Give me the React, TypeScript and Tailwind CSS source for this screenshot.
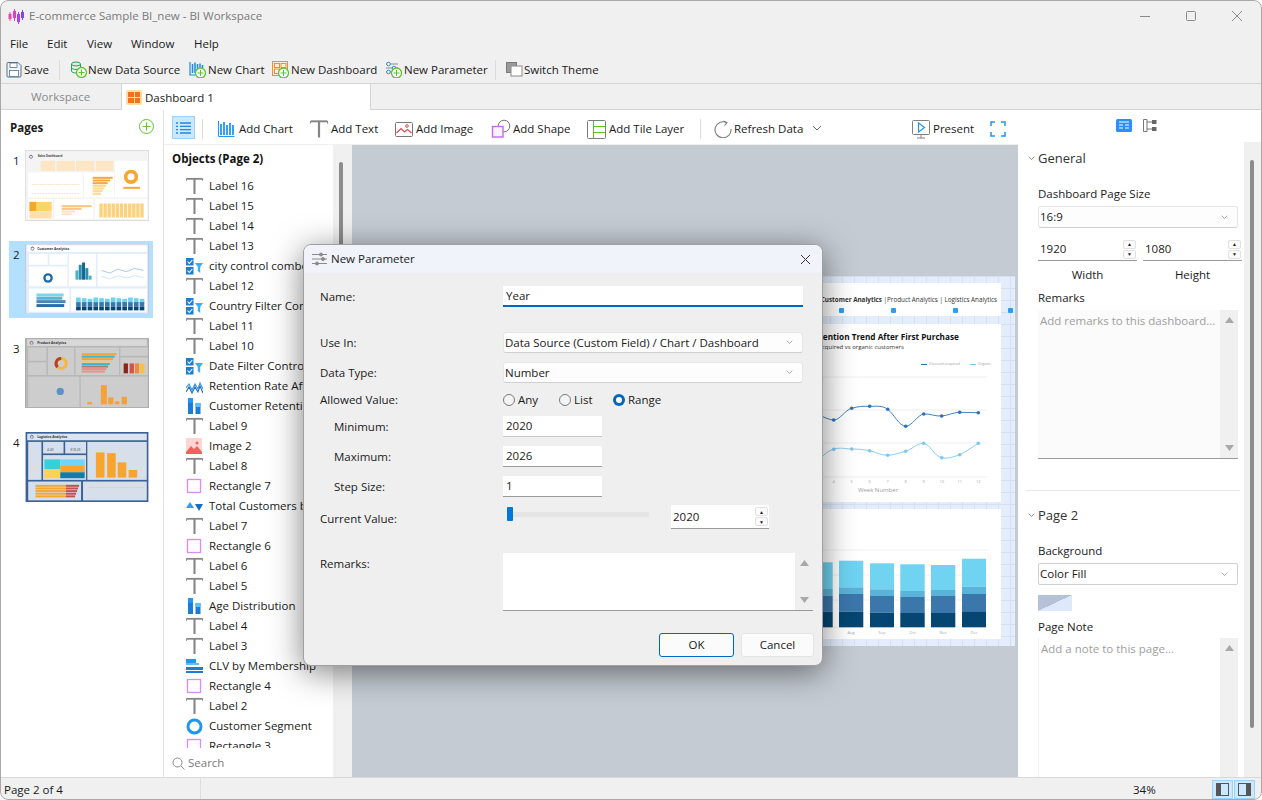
import type { ReactNode } from 'react';
import clsx from 'clsx';

// ---- small icons ----
const Plus = ({ x, y, r = 5 }: { x: number; y: number; r?: number }) => (
  <g>
    <circle cx={x} cy={y} r={r} fill="#fff" stroke="#5cc52c" strokeWidth="1.3" />
    <path d={`M${x - r + 2} ${y}H${x + r - 2}M${x} ${y - r + 2}V${y + r - 2}`} stroke="#5cc52c" strokeWidth="1.1" />
  </g>
);

const SaveIcon = () => (
  <svg width="16" height="17" viewBox="0 0 16 17" fill="none">
    <path d="M1 2.5A1 1 0 0 1 2 1.500H12L15 4.500V15A1 1 0 0 1 14 16H2A1 1 0 0 1 1 15Z" fill="#eef5fb" stroke="#55708a" />
    <rect x="4" y="2" width="7" height="4.500" fill="#fff" stroke="#55708a" strokeWidth=".8" />
    <rect x="3.500" y="9.500" width="9" height="6" fill="#fff" stroke="#55708a" strokeWidth=".8" />
  </svg>
);

const DataSourceIcon = () => (
  <svg width="17" height="17" viewBox="0 0 17 17" fill="none">
    <ellipse cx="6" cy="3" rx="4.500" ry="2" fill="#d8f0dc" stroke="#2b9a5a" />
    <path d="M1.500 3V10C1.500 11 3.500 12 6 12S10.500 11 10.500 10V3M1.500 6.500C1.500 7.500 3.500 8.500 6 8.500S10.500 7.500 10.500 6.500" stroke="#2b9a5a" />
    <Plus x={11.500} y={11.500} />
  </svg>
);

const ChartPlusIcon = () => (
  <svg width="17" height="17" viewBox="0 0 17 17" fill="none">
    <path d="M1 1V14H9" stroke="#1e88e5" strokeWidth="1.2" />
    <path d="M3.500 12V3M6 12V1.500M8.500 10V3M11 7V2.500M13.500 7V4" stroke="#1e88e5" strokeWidth="1.500" />
    <Plus x={11.500} y={12} />
  </svg>
);

const DashPlusIcon = () => (
  <svg width="17" height="17" viewBox="0 0 17 17" fill="none">
    <rect x=".5" y=".5" width="15" height="14" fill="#fff2dd" stroke="#f08a3c" />
    <rect x="2.500" y="2.500" width="5" height="4" stroke="#f08a3c" />
    <rect x="9" y="2.500" width="5" height="4" stroke="#f08a3c" />
    <rect x="2.500" y="8" width="5" height="4.500" stroke="#f08a3c" />
    <Plus x={11.500} y={12} />
  </svg>
);

const ParamPlusIcon = () => (
  <svg width="17" height="17" viewBox="0 0 17 17" fill="none">
    <path d="M1 3H13M1 7H13M1 11H7" stroke="#8a8a8a" />
    <circle cx="3.500" cy="3" r="1.800" fill="#fff" stroke="#2b86d9" />
    <circle cx="9" cy="7" r="1.800" fill="#fff" stroke="#2b86d9" />
    <circle cx="3.500" cy="11" r="1.800" fill="#fff" stroke="#2b86d9" />
    <Plus x={11.500} y={12} />
  </svg>
);

const ThemeIcon = () => (
  <svg width="17" height="15" viewBox="0 0 17 15" fill="none">
    <rect x=".5" y=".5" width="10" height="10" fill="#9a9a9a" stroke="#7a7a7a" />
    <rect x="5" y="4" width="11" height="10" fill="#fff" stroke="#8a8a8a" />
  </svg>
);

const BarsIcon = () => (
  <svg width="17" height="18" viewBox="0 0 17 18" fill="none">
    <path d="M.5 1V16.500H16.500" stroke="#2196f3" />
    <path d="M3 15V4M6 15V2M9 15V5M12 15V3M15 15V5" stroke="#2196f3" strokeWidth="1.800" />
  </svg>
);

const BigT = ({ w = 18 }: { w?: number }) => (
  <svg width={w} height="18" viewBox="0 0 18 18" fill="none">
    <path d="M.5 3.500V1H17.500V3.500" stroke="#858585" strokeWidth="1" />
    <path d="M1 1.500H17" stroke="#858585" strokeWidth="1.600" />
    <path d="M9 1.500V17.500" stroke="#858585" strokeWidth="2.200" />
  </svg>
);

const ImageIcon = () => (
  <svg width="18" height="15" viewBox="0 0 18 15" fill="none">
    <rect x=".5" y=".5" width="17" height="14" rx="1" fill="#fff" stroke="#777" />
    <path d="M1.500 11L6 6.500L9.500 10L12.500 7.500L16.500 11" stroke="#e8484f" strokeWidth="1.200" />
    <circle cx="12" cy="4" r="1.300" stroke="#e8484f" />
  </svg>
);

const ShapeIcon = () => (
  <svg width="20" height="20" viewBox="0 0 20 20" fill="none">
    <circle cx="13" cy="7" r="5.800" fill="#fff" stroke="#777" />
    <rect x="1.500" y="7.500" width="10.500" height="10.500" fill="#fbf0ff" stroke="#c768f0" strokeWidth="1.400" />
  </svg>
);

const TileIcon = () => (
  <svg width="19" height="19" viewBox="0 0 19 19" fill="none">
    <rect x=".5" y=".5" width="18" height="18" rx="1" fill="#fff" stroke="#7c7c7c" />
    <path d="M6.500 1V18" stroke="#7c7c7c" />
    <path d="M6.500 6.500H18M6.500 12.500H18" stroke="#5cc52c" strokeWidth="1.200" />
    <path d="M6.500 1V18" stroke="#5cc52c" strokeWidth=".8" />
  </svg>
);

const RefreshIcon = () => (
  <svg width="18" height="18" viewBox="0 0 18 18" fill="none">
    <path d="M12.500 2.600A8 8 0 1 0 17 9" stroke="#7d7d7d" strokeWidth="1.100" />
    <path d="M9.500 1L13 2.700L10.500 5.500" stroke="#7d7d7d" strokeWidth="1.100" />
  </svg>
);

const PresentIcon = () => (
  <svg width="18" height="19" viewBox="0 0 18 19" fill="none">
    <rect x=".5" y=".5" width="17" height="14" rx="1" fill="#fff" stroke="#808080" />
    <path d="M9 15V18M5 18H13" stroke="#808080" />
    <path d="M6.500 3V12L12.500 7.500Z" fill="#fff" stroke="#2196f3" strokeWidth="1.200" />
  </svg>
);

const FullscreenIcon = () => (
  <svg width="16" height="16" viewBox="0 0 16 16" fill="none" stroke="#1e96f0" strokeWidth="1.500">
    <path d="M1 5V1H5M11 1H15V5M15 11V15H11M5 15H1V11" />
  </svg>
);

const Chevron = ({ w = 10, c = '#666' }: { w?: number; c?: string }) => (
  <svg width={w} height={w * 0.6} viewBox="0 0 10 6" fill="none">
    <path d="M1 1L5 5L9 1" stroke={c} strokeWidth="1" />
  </svg>
);

const Tri = ({ down }: { down?: boolean }) => (
  <svg width="9" height="6" viewBox="0 0 9 6">
    <path d={down ? 'M0 0H9L4.500 6Z' : 'M0 6H9L4.500 0Z'} fill="#a8a8a8" />
  </svg>
);

const ListIcon = () => (
  <svg width="15" height="12" viewBox="0 0 15 12" stroke="#1e88e5" strokeWidth="1.300">
    <path d="M0 1H2M4 1H15M0 4.300H2M4 4.300H15M0 7.700H2M4 7.700H15M0 11H2M4 11H15" />
  </svg>
);

// ---- object tree icons ----
type Kind = 'text' | 'filter' | 'line' | 'bars' | 'image' | 'rect' | 'tri' | 'hbar' | 'donut';

const ObjIcon = ({ kind }: { kind: Kind }) => {
  if (kind === 'text') return <BigT w={17} />;
  if (kind === 'filter')
    return (
      <svg width="17" height="18" viewBox="0 0 17 18">
        <rect x="0" y="1" width="7.500" height="7.500" fill="#1a7fd4" />
        <rect x="0" y="10" width="7.500" height="7.500" fill="#1a7fd4" />
        <path d="M1.500 4.500L3.300 6.500L6.300 3M1.500 13.500L3.300 15.500L6.300 12" stroke="#fff" strokeWidth="1.100" fill="none" />
        <path d="M9 6H17L14.200 10V16L11.800 14V10Z" fill="#35b3f0" />
      </svg>
    );
  if (kind === 'line')
    return (
      <svg width="17" height="18" viewBox="0 0 17 18" fill="none">
        <path d="M0 11L3 7L6 13L9 7L12 12L14 6L17 12" stroke="#3b93de" strokeWidth="1.100" />
        <path d="M0 15L3 10L6 16L9 10L12 15L14 9L17 16" stroke="#1c6fbd" strokeWidth="1.100" />
      </svg>
    );
  if (kind === 'bars')
    return (
      <svg width="17" height="18" viewBox="0 0 17 18">
        <rect x="2" y="1" width="5" height="16" fill="#1a7fd4" />
        <rect x="2" y="1" width="5" height="5" fill="#1e9af0" />
        <rect x="9.500" y="6" width="5" height="11" fill="#1a7fd4" />
        <rect x="9.500" y="6" width="5" height="4" fill="#5bc0f5" />
      </svg>
    );
  if (kind === 'image')
    return (
      <svg width="17" height="17" viewBox="0 0 17 17">
        <rect width="16" height="16" fill="#fdd5d2" />
        <path d="M0 14L5 8L8 11L11 8L16 14V16H0Z" fill="#f0625e" />
        <circle cx="11" cy="5" r="1.500" fill="#f0625e" />
      </svg>
    );
  if (kind === 'rect')
    return (
      <svg width="17" height="16" viewBox="0 0 17 16" fill="none">
        <rect x="1.500" y="1.500" width="13" height="13" stroke="#dc8cf8" strokeWidth="1.300" fill="#fff" />
      </svg>
    );
  if (kind === 'tri')
    return (
      <svg width="17" height="12" viewBox="0 0 17 12">
        <path d="M0 8H8L4 2Z" fill="#2aa0f0" />
        <path d="M9 4H17L13 11Z" fill="#146fc0" />
      </svg>
    );
  if (kind === 'hbar')
    return (
      <svg width="17" height="16" viewBox="0 0 17 16">
        <rect x="0" y="1" width="10" height="4" fill="#1e9af0" />
        <rect x="0" y="5" width="13" height="2" fill="#5bc0f5" />
        <rect x="0" y="9" width="17" height="3" fill="#1a7fd4" />
        <rect x="0" y="13" width="17" height="2" fill="#1a7fd4" />
      </svg>
    );
  return (
    <svg width="17" height="17" viewBox="0 0 17 17" fill="none">
      <circle cx="8.500" cy="8.500" r="6.500" stroke="#1e96f0" strokeWidth="3" />
    </svg>
  );
};

const objects: [Kind, string][] = [
  ['text', 'Label 16'],
  ['text', 'Label 15'],
  ['text', 'Label 14'],
  ['text', 'Label 13'],
  ['filter', 'city control combobox'],
  ['text', 'Label 12'],
  ['filter', 'Country Filter Control'],
  ['text', 'Label 11'],
  ['text', 'Label 10'],
  ['filter', 'Date Filter Control'],
  ['line', 'Retention Rate After'],
  ['bars', 'Customer Retention'],
  ['text', 'Label 9'],
  ['image', 'Image 2'],
  ['text', 'Label 8'],
  ['rect', 'Rectangle 7'],
  ['tri', 'Total Customers by'],
  ['text', 'Label 7'],
  ['rect', 'Rectangle 6'],
  ['text', 'Label 6'],
  ['text', 'Label 5'],
  ['bars', 'Age Distribution'],
  ['text', 'Label 4'],
  ['text', 'Label 3'],
  ['hbar', 'CLV by Membership'],
  ['rect', 'Rectangle 4'],
  ['text', 'Label 2'],
  ['donut', 'Customer Segment'],
  ['rect', 'Rectangle 3'],
];

// ---- page thumbnails, coordinates read off the screenshot at 3x ----
const Logo = ({ x, y }: { x: number; y: number }) => (
  <g fill="none" strokeWidth="2.500">
    <circle cx={x} cy={y} r="4.500" stroke="#2f7ee0" />
    <path d={`M${x - 4} ${y - 2}A4.500 4.500 0 0 1 ${x + 3} ${y - 3.500}`} stroke="#e8433a" />
    <path d={`M${x + 4} ${y + 2}A4.500 4.500 0 0 1 ${x - 3} ${y + 3.500}`} stroke="#f5b72b" />
  </g>
);

const Thumb1 = () => (
  <svg width="124" height="71" viewBox="75 30 372 212" className="block">
    <rect x="75" y="30" width="372" height="212" fill="#f4f4f4" stroke="#cfcfcf" strokeWidth="3" />
    <Logo x={93} y={50} />
    <text x="113" y="52" fontSize="9" fontWeight="700" fill="#444">Sales Dashboard</text>
    {[[122, 43], [170, 55], [228, 55], [288, 52]].map(([x, w]) => (
      <rect key={x} x={x} y="62" width={w} height="30" fill="#fde6c4" />
    ))}
    <rect x="85" y="97" width="163" height="75" fill="#fff" />
    <path d="M95 133H240M95 160H240" stroke="#f9c070" strokeWidth="1.500" strokeDasharray="5 3" />
    <rect x="252" y="97" width="90" height="75" fill="#fff" />
    {[60, 52, 45, 40, 35, 30, 25].map((w, i) => (
      <rect key={i} x="278" y={110 + i * 8} width={w} height="6" fill={i < 3 ? '#f9a73b' : '#fdd88e'} />
    ))}
    <rect x="345" y="62" width="97" height="110" fill="#fff" />
    <circle cx="393" cy="110" r="16" fill="none" stroke="#f8a72d" strokeWidth="11" />
    <rect x="370" y="140" width="50" height="6" fill="#f9a73b" />
    <rect x="85" y="177" width="73" height="60" fill="#fff" />
    <rect x="88" y="185" width="22" height="28" fill="#f8a72d" />
    <rect x="110" y="185" width="45" height="28" fill="#fdd36c" />
    <rect x="88" y="213" width="67" height="22" fill="#fde0ae" />
    <rect x="163" y="177" width="117" height="60" fill="#fff" />
    {[90, 60, 40, 30].map((w, i) => (
      <rect key={i} x="185" y={195 + i * 8} width={w} height="6" fill={i < 2 ? '#fcc47c' : '#fde2bf'} />
    ))}
    <rect x="285" y="177" width="157" height="60" fill="#fff" />
    {[0, 1, 2, 3, 4, 5, 6, 7, 8, 9, 10].map(i => (
      <rect key={i} x={298 + i * 12.300} y="190" width="10" height="42" fill="#fcd27c" />
    ))}
  </svg>
);

const Thumb2 = () => (
  <svg width="124" height="70" viewBox="75 312 372 212" className="block">
    <rect x="75" y="312" width="372" height="212" fill="#e3edfb" stroke="#c4c8d0" strokeWidth="3" />
    <rect x="80" y="316" width="362" height="20" fill="#fff" />
    <Logo x={96} y={326} />
    <text x="110" y="330" fontSize="10" fontWeight="700" fill="#333">Customer Analytics</text>
    <rect x="85" y="342" width="57" height="33" fill="#fff" />
    <rect x="147" y="342" width="55" height="33" fill="#fff" />
    <rect x="85" y="380" width="117" height="60" fill="#fff" />
    <circle cx="143" cy="415" r="11" fill="none" stroke="#1f6ba5" strokeWidth="7" />
    <rect x="206" y="342" width="82" height="98" fill="#fff" />
    {[[226, 392, '#4cb2c8'], [236, 375, '#2e8fb0'], [246, 368, '#14668f'], [256, 385, '#2e8fb0'], [266, 408, '#4cb2c8']].map(([x, y, c]) => (
      <rect key={x as number} x={x as number} y={y as number} width="9" height={420 - (y as number)} fill={c as string} />
    ))}
    <rect x="293" y="342" width="149" height="98" fill="#fff" />
    <path d="M305 392L330 400L355 388L380 396L405 386L432 392" fill="none" stroke="#5a93c9" strokeWidth="1.500" />
    <path d="M305 410L330 418L355 408L380 415L405 408L432 413" fill="none" stroke="#9bd4f5" strokeWidth="1.500" />
    <rect x="85" y="447" width="123" height="70" fill="#fff" />
    <rect x="108" y="462" width="82" height="9" fill="#7bd3ec" />
    <rect x="108" y="472" width="78" height="9" fill="#5ab3d8" />
    <rect x="108" y="482" width="88" height="9" fill="#4c86b8" />
    <rect x="108" y="494" width="84" height="9" fill="#2a6ea5" />
    <rect x="213" y="447" width="229" height="70" fill="#fff" />
    {Array.from({ length: 12 }, (_, i) => (
      <g key={i}>
        <rect x={228 + i * 17.500} y={474 + (i % 3) * 2} width="14" height="14" fill="#6fd3f1" />
        <rect x={228 + i * 17.500} y="488" width="14" height="14" fill="#3b77ab" />
        <rect x={228 + i * 17.500} y="502" width="14" height="11" fill="#054672" />
      </g>
    ))}
  </svg>
);

const Thumb3 = () => (
  <svg width="124" height="70" viewBox="75 38 372 212" className="block">
    <rect x="75" y="38" width="372" height="212" fill="#b8b8b8" stroke="#a8a8a8" strokeWidth="3" />
    <rect x="80" y="42" width="362" height="20" fill="#d8d8d8" />
    <Logo x={93} y={53} />
    <text x="110" y="57" fontSize="10" fontWeight="700" fill="#333">Product Analytics</text>
    <rect x="83" y="67" width="55" height="40" fill="#cdcdcd" />
    <rect x="83" y="112" width="55" height="38" fill="#cdcdcd" />
    <rect x="143" y="67" width="79" height="83" fill="#cdcdcd" />
    <circle cx="183" cy="115" r="15" fill="none" stroke="#f5b83d" strokeWidth="9" />
    <path d="M183 100A15 15 0 0 0 172 126" fill="none" stroke="#b8402a" strokeWidth="9" />
    <rect x="226" y="67" width="132" height="83" fill="#cdcdcd" />
    {['#f5a52d', '#35b8d8', '#f5a52d', '#f3c66a', '#35b8d8', '#a08070', '#ef8b8b', '#ef8b8b'].map((c, i) => (
      <rect key={i} x="245" y={84 + i * 7.500} width={105 - i * 5} height="6" fill={c} />
    ))}
    <rect x="362" y="67" width="83" height="25" fill="#cdcdcd" />
    <rect x="362" y="97" width="83" height="53" fill="#cdcdcd" />
    {[[372, '#8a2416'], [390, '#d8504a'], [406, '#f08a3c'], [422, '#fbc040']].map(([x, c]) => (
      <rect key={x as number} x={x as number} y="115" width="13" height="30" fill={c as string} />
    ))}
    <rect x="83" y="155" width="155" height="92" fill="#cdcdcd" />
    <circle cx="180" cy="200" r="11" fill="#5d92c8" />
    <rect x="242" y="155" width="203" height="92" fill="#cdcdcd" />
    <rect x="303" y="181" width="18" height="58" fill="#f5a03a" />
    <rect x="325" y="218" width="16" height="21" fill="#f5a03a" />
    <rect x="366" y="216" width="16" height="23" fill="#f5a03a" />
    <rect x="262" y="232" width="14" height="7" fill="#f5a03a" />
    <rect x="345" y="230" width="14" height="9" fill="#f5a03a" />
  </svg>
);

const Thumb4 = () => (
  <svg width="124" height="70" viewBox="75 320 372 212" className="block">
    <rect x="75" y="320" width="372" height="212" fill="#3a6298" />
    <rect x="80" y="325" width="362" height="20" fill="#dde4ee" />
    <Logo x={94} y={335} />
    <text x="110" y="339" fontSize="10" fontWeight="700" fill="#333">Logistics Analytics</text>
    <rect x="83" y="350" width="40" height="115" fill="#d7dfea" />
    <rect x="128" y="350" width="62" height="35" fill="#d7dfea" />
    <rect x="195" y="350" width="63" height="35" fill="#d7dfea" />
    <text x="140" y="378" fontSize="10" fill="#444">4.40</text>
    <text x="210" y="378" fontSize="10" fill="#444">$18.23</text>
    <rect x="128" y="390" width="130" height="75" fill="#d7dfea" />
    <rect x="132" y="403" width="48" height="29" fill="#35d0d8" />
    <rect x="132" y="432" width="48" height="28" fill="#fdd05a" />
    <rect x="180" y="403" width="74" height="20" fill="#6fd6fa" />
    <rect x="180" y="423" width="74" height="19" fill="#f7a52f" />
    <rect x="180" y="442" width="74" height="18" fill="#0f7da5" />
    <rect x="262" y="350" width="180" height="115" fill="#d7dfea" />
    {[[288, 382], [322, 384], [354, 412], [387, 435]].map(([x, y]) => (
      <rect key={x} x={x} y={y} width="26" height={458 - y} fill="#f7a52f" />
    ))}
    <rect x="83" y="470" width="160" height="57" fill="#d7dfea" />
    {[0, 1, 2, 3, 4].map(i => (
      <g key={i}>
        <rect x="105" y={480 + i * 8} width="92" height="6" fill="#f7a52f" />
        <rect x="197" y={480 + i * 8} width={40 - i * 3} height="6" fill="#c8504a" />
      </g>
    ))}
    <rect x="249" y="470" width="193" height="57" fill="#d7dfea" />
    <path d="M268 488H435" stroke="#f2b25a" strokeWidth="1.500" strokeDasharray="4 3" />
  </svg>
);

// ---- dashboard page behind the dialog, coordinates are page coordinates ----
const line1 = 'M823 416.700C826 418 830 420 833.700 420C840 420 845 410 851.700 408.300C858 406.500 863 406 869.700 406.300C876 406.500 882 405 887.700 409.300C894 414 899 426 905.700 426.300C912 426.500 917 415 923.700 414C930 413.500 935 416.500 941.700 416C948 415.500 953 412.500 959.700 412.300C966 412 972 413 978.300 412.700';
const line2 = 'M823 456C827 452 830 450 833.700 449.300C840 447 845 449 851.700 449C858 449 863 449.500 869.700 450.700C876 452 881 455.500 887.700 455.300C894 455 899 453 905.700 451.300C912 449.500 917 443 923.700 443.300C930 444 934 456 941.700 457.700C948 459 953 457 959.700 454.700C966 452 972 447 978.300 443.300';
const pts1 = [[833.7, 420], [851.7, 408.3], [869.7, 406.3], [887.7, 409.3], [905.7, 426.3], [923.7, 414], [941.7, 416], [959.7, 412.3], [978.3, 412.7]];
const pts2 = [[833.7, 449.3], [851.7, 449], [869.7, 450.7], [887.7, 455.3], [905.7, 451.3], [923.7, 443.3], [941.7, 457.7], [959.7, 454.7], [978.3, 443.3]];
const weeks = ['4', '5', '6', '7', '8', '9', '10', '11', '12'];

const stacks: [string, number, number, number, number, number, number][] = [
  ['', 790, 832.7, 562.300, 589, 595.700, 611.700],
  ['Aug', 839, 863.300, 560.700, 587.300, 594, 611.700],
  ['Sep', 870, 894, 563.300, 589.300, 596, 612.700],
  ['Oct', 900.300, 924.700, 564.300, 591, 597, 613],
  ['Nov', 931, 955.300, 565, 590, 596, 613],
  ['Dec', 962, 986, 558.700, 586.700, 594, 611.300],
];

const RetentionChart = () => (
  <svg width="253" height="132" viewBox="747 370 253 132" className="block">
    {[377, 410, 443, 477].map(y => (
      <path key={y} d={`M760 ${y}H987`} stroke="#efefef" />
    ))}
    <path d={line1} fill="none" stroke="#2a73b8" strokeWidth=".9" />
    <path d={line2} fill="none" stroke="#7cc8f5" strokeWidth=".9" />
    {pts1.map(([x, y]) => (
      <circle key={x} cx={x} cy={y} r="1.800" fill="#2a73b8" />
    ))}
    {pts2.map(([x, y]) => (
      <circle key={x} cx={x} cy={y} r="1.800" fill="#7cc8f5" />
    ))}
    {weeks.map((w, i) => (
      <text key={w} x={pts1[i][0]} y="482.500" fontSize="4" fill="#a8a8a8" textAnchor="middle">{w}</text>
    ))}
    <text x="878" y="492" fontSize="6" fill="#a0a0a0" textAnchor="middle">Week Number</text>
  </svg>
);

const StackChart = () => (
  <svg width="253" height="130" viewBox="747 509 253 130" className="block">
    {[550, 575, 600, 627].map(y => (
      <path key={y} d={`M760 ${y}H988`} stroke="#f0f0f0" />
    ))}
    {stacks.map(([m, x1, x2, a, b, c, d]) => (
      <g key={x1}>
        <rect x={x1} y={a} width={x2 - x1} height={b - a} fill="#6fd3f1" />
        <rect x={x1} y={b} width={x2 - x1} height={c - b} fill="#5ab3d8" />
        <rect x={x1} y={c} width={x2 - x1} height={d - c} fill="#3b77ab" />
        <rect x={x1} y={d} width={x2 - x1} height={627.300 - d} fill="#054672" />
        {m && <text x={(x1 + x2) / 2} y="633.500" fontSize="4" fill="#a8a8a8" textAnchor="middle">{m}</text>}
      </g>
    ))}
  </svg>
);

// ---- form controls ----
const Select = ({ value, className }: { value: string; className: string }) => (
  <div className={clsx('flex items-center justify-between pl-[1px] pr-[9px] bg-[#fdfdfd] border border-[#e6e6e6] border-b-[#d0d0d0] rounded-[3px] text-[#1a1a1a]', className)}>
    <span>{value}</span>
    <Chevron w={7} c="#8a8a8a" />
  </div>
);

const Spin = ({ value, className }: { value: string; className: string }) => (
  <div className={clsx('flex items-center justify-between pl-[2px] pr-[1px] bg-white border-b border-[#9a9a9a] text-[#1a1a1a]', className)}>
    <span>{value}</span>
    <div className="flex flex-col gap-[1px]">
      <div className="w-[13px] h-[9px] flex items-center justify-center bg-[#fbfbfb] border border-[#e0e0e0] rounded-[2px] text-[5px] text-[#222]">▲</div>
      <div className="w-[13px] h-[9px] flex items-center justify-center bg-[#fbfbfb] border border-[#e0e0e0] rounded-[2px] text-[5px] text-[#222]">▼</div>
    </div>
  </div>
);

const Radio = ({ on, label, className }: { on?: boolean; label: string; className: string }) => (
  <div className={clsx('flex items-center gap-[3px]', className)}>
    {on ? (
      <div className="w-[12px] h-[12px] rounded-full bg-[#0067c0] flex items-center justify-center">
        <div className="w-[6px] h-[6px] rounded-full bg-white" />
      </div>
    ) : (
      <div className="w-[12px] h-[12px] rounded-full border border-[#7a7a7a] bg-[#f5f5f5]" />
    )}
    <span>{label}</span>
  </div>
);

const Row = ({ label, className, labelClass, sub, children }: { label: string; className: string; labelClass?: string; sub?: boolean; children?: ReactNode }) => (
  <div className={clsx('flex items-center', className)}>
    <div className={clsx('shrink-0', sub ? 'w-[169px] ml-[14px]' : 'w-[183px]', labelClass)}>{label}</div>
    {children}
  </div>
);

const Tool = ({ w, gap, icon, label }: { w: string; gap: string; icon: ReactNode; label: string }) => (
  <div className={clsx('flex items-center shrink-0', w, gap)}>
    <div className="shrink-0 flex">{icon}</div>
    <span className="whitespace-nowrap">{label}</span>
  </div>
);

const Sidebar = () => (
  <div className="w-[163px] shrink-0 bg-white border-r border-[#e3e3e3] box-content flex flex-col">
    <div className="h-[36px] flex items-center justify-between pl-[10px] pr-[9px]">
      <span className="font-bold">Pages</span>
      <svg width="15" height="15" viewBox="0 0 15 15" fill="none" stroke="#5cc52c" className="-mt-[3px]">
        <circle cx="7.500" cy="7.500" r="7" />
        <path d="M3.500 7.500H11.500M7.500 3.500V11.500" />
      </svg>
    </div>
    <div className="mt-[4px] h-[71px] flex pl-[13px]">
      <span className="w-[12px] pt-[3px]">1</span>
      <Thumb1 />
    </div>
    <div className="mt-[20px] mx-[9px] h-[77px] w-[144px] bg-[#b3e0ff] flex pl-[4px] pt-[3px]">
      <span className="w-[12px] pt-[3px]">2</span>
      <Thumb2 />
    </div>
    <div className="mt-[20px] h-[70px] flex pl-[13px]">
      <span className="w-[12px] pt-[3px]">3</span>
      <Thumb3 />
    </div>
    <div className="mt-[24px] h-[70px] flex pl-[13px]">
      <span className="w-[12px] pt-[3px]">4</span>
      <Thumb4 />
    </div>
  </div>
);

const DashboardPage = () => (
  <div className="w-[653px] h-[370px] bg-[#e3edfb] bg-[linear-gradient(#d5e1f3_1px,transparent_1px),linear-gradient(90deg,#d5e1f3_1px,transparent_1px)] bg-[size:12px_12px] pt-[7px] pl-[385px] pr-[14px] flex flex-col">
    <div className="h-[33px] bg-white flex flex-col items-end pr-[4px] pt-[11px]">
      <span className="text-[6.300px] leading-[12px] whitespace-nowrap text-[#333]">
        <b>| Customer Analytics</b> |Product Analytics | Logistics Analytics
      </span>
      <div className="mt-[2px] w-full flex pl-[92px]">
        <div className="w-[5px] h-[5px] shrink-0 bg-[#2a9df4] rounded-[1px]" />
        <div className="ml-[47px] w-[5px] h-[5px] shrink-0 bg-[#2a9df4] rounded-[1px]" />
        <div className="ml-[57px] w-[5px] h-[5px] shrink-0 bg-[#2a9df4] rounded-[1px]" />
        <div className="ml-[50px] w-[5px] h-[5px] shrink-0 bg-[#2a9df4] rounded-[1px]" />
      </div>
    </div>
    <div className="mt-[8px] h-[178px] bg-white flex flex-col">
      <div className="pl-[62px] pt-[7px] text-[8.200px] leading-[12px] font-bold text-[#111] whitespace-nowrap">Retention Trend After First Purchase</div>
      <div className="pl-[45px] text-[6px] leading-[9px] text-[#333] whitespace-nowrap">Discount-acquired vs organic customers</div>
      <div className="mt-[6px] h-[12px] flex items-center justify-end gap-[2px] pr-[10px] text-[3.600px] text-[#a0a0a0]">
        <span className="border-t border-[#2a73b8] w-[6px]" />
        <span>Discount-acquired</span>
        <span className="border-t border-[#7cc8f5] w-[6px] ml-[8px]" />
        <span>Organic</span>
      </div>
      <RetentionChart />
    </div>
    <div className="mt-[7px] h-[130px] bg-white">
      <StackChart />
    </div>
  </div>
);

const ParameterDialog = () => (
  <div className="absolute left-[303px] top-[244px] w-[520px] h-[422px] rounded-[8px] bg-[#efefef] border border-[#a0a0a0] shadow-[0_6px_32px_rgba(0,0,0,0.5)] overflow-hidden flex flex-col text-[#1a1a1a]">
    <div className="h-[28px] shrink-0 bg-[#f0f3f9] flex items-center pl-[8px] pr-[11px]">
      <svg width="15" height="14" viewBox="0 0 15 14" fill="none" stroke="#8a8a8a">
        <path d="M0 2.500H15M0 7H15M0 11.500H15" />
        <circle cx="9" cy="2.500" r="1.500" fill="#8a8a8a" />
        <circle cx="11" cy="7" r="1.500" fill="#8a8a8a" />
        <circle cx="5" cy="11.500" r="1.500" fill="#8a8a8a" />
      </svg>
      <span className="ml-[4px] flex-1">New Parameter</span>
      <svg width="11" height="11" viewBox="0 0 11 11" stroke="#333" strokeWidth="1">
        <path d="M1 1L10 10M10 1L1 10" />
      </svg>
    </div>
    <div className="flex-1 flex flex-col pl-[16px] pr-[9px]">
      <Row label="Name:" className="mt-[13px] h-[21px]">
        <div className="w-[300px] h-[21px] bg-white border-b-2 border-[#0067c0] pl-[3px] flex items-center">Year</div>
      </Row>
      <Row label="Use In:" className="mt-[25px] h-[21px]">
        <Select value="Data Source (Custom Field) / Chart / Dashboard" className="w-[300px] h-[21px]" />
      </Row>
      <Row label="Data Type:" className="mt-[9px] h-[21px]">
        <Select value="Number" className="w-[300px] h-[21px]" />
      </Row>
      <Row label="Allowed Value:" className="mt-[7px] h-[19px]">
        <Radio label="Any" className="w-[56px]" />
        <Radio label="List" className="w-[54px]" />
        <Radio on label="Range" className="" />
      </Row>
      <Row sub label="Minimum:" className="mt-[7px] h-[21px]">
        <div className="w-[99px] h-[21px] bg-white border-b border-[#c8c8c8] pl-[3px] flex items-center">2020</div>
      </Row>
      <Row sub label="Maximum:" className="mt-[9px] h-[21px]">
        <div className="w-[99px] h-[21px] bg-white border-b border-[#9a9a9a] pl-[3px] flex items-center">2026</div>
      </Row>
      <Row sub label="Step Size:" className="mt-[9px] h-[21px]">
        <div className="w-[99px] h-[21px] bg-white border-b border-[#9a9a9a] pl-[3px] flex items-center">1</div>
      </Row>
      <Row label="Current Value:" labelClass="pt-[3px]" className="mt-[8px] h-[24px]">
        <div className="w-[146px] ml-[4px] h-[14px] -mt-[6px] flex items-center relative">
          <div className="w-[142px] h-[5px] bg-[#e4e4e4] rounded-[1px]" />
          <div className="absolute left-0 top-0 w-[6px] h-[14px] bg-[#0078d4] rounded-[1px]" />
        </div>
        <Spin value="2020" className="ml-[18px] w-[98px] h-[24px]" />
      </Row>
      <div className="mt-[24px] flex h-[58px]">
        <div className="w-[183px] shrink-0 pt-[3px]">Remarks:</div>
        <div className="w-[310px] bg-white border-b border-[#9a9a9a] flex justify-end">
          <div className="w-[18px] bg-[#efefef] flex flex-col items-center justify-between py-[7px]">
            <Tri />
            <Tri down />
          </div>
        </div>
      </div>
      <div className="mt-[22px] flex justify-end gap-[7px] pr-0 w-[494px]">
        <div className="w-[75px] h-[24px] bg-[#fbfbfb] border border-[#0067c0] rounded-[3px] flex items-center justify-center">OK</div>
        <div className="w-[73px] h-[24px] bg-[#fbfbfb] border border-[#e4e4e4] rounded-[3px] flex items-center justify-center">Cancel</div>
      </div>
    </div>
  </div>
);

const PropertyPanel = () => (
  <div className="w-[244px] shrink-0 bg-white flex flex-col">
    <div className="h-[32px] shrink-0 flex items-center pl-[98px] gap-[11px] pb-[2px]">
      <svg width="16" height="13" viewBox="0 0 16 13">
        <rect width="16" height="13" rx="1.500" fill="#2a90f5" />
        <path d="M3 3H13M3 6H7M9 6H13M3 9H7M9 9H13" stroke="#fff" strokeWidth="1.200" />
      </svg>
      <svg width="14" height="13" viewBox="0 0 14 13" fill="none">
        <path d="M.5 .5H4V12.500H.5ZM4 3H9M4 10H9" stroke="#777" />
        <rect x="9" y="1" width="4.500" height="4" fill="#666" />
        <rect x="9" y="8" width="4.500" height="4" fill="#666" />
      </svg>
    </div>
    <div className="flex-1 flex min-h-0">
      <div className="w-[226px] flex flex-col pl-[20px] overflow-hidden">
        <div className="h-[32px] shrink-0 -ml-[10px] flex items-center gap-[3px] text-[13px] text-[#333]">
          <Chevron w={7} />
          <span>General</span>
        </div>
        <div className="mt-[12px] h-[16px]">Dashboard Page Size</div>
        <Select value="16:9" className="mt-[4px] h-[22px] w-[200px] shrink-0" />
        <div className="mt-[10px] flex gap-[6px] shrink-0 w-[204px]">
          <Spin value="1920" className="w-[99px] h-[23px]" />
          <Spin value="1080" className="w-[99px] h-[23px]" />
        </div>
        <div className="mt-[6px] h-[16px] flex w-[204px] shrink-0">
          <span className="w-[99px] text-center">Width</span>
          <span className="ml-[6px] w-[99px] text-center">Height</span>
        </div>
        <div className="mt-[7px] h-[16px]">Remarks</div>
        <div className="mt-[4px] h-[149px] w-[200px] shrink-0 border-b border-[#9a9a9a] flex">
          <div className="flex-1 bg-[#fbfbfb] pl-[2px] pt-[3px] text-[#9e9e9e] whitespace-nowrap">Add remarks to this dashboard...</div>
          <div className="w-[18px] bg-[#f0f0f0] flex flex-col items-center justify-between py-[7px]">
            <Tri />
            <Tri down />
          </div>
        </div>
        <div className="mt-[31px] -ml-[12px] w-[214px] shrink-0 border-t border-[#e8e8e8]" />
        <div className="mt-[8px] h-[32px] shrink-0 -ml-[10px] flex items-center gap-[3px] text-[13px] text-[#333]">
          <Chevron w={7} />
          <span>Page 2</span>
        </div>
        <div className="mt-[12px] h-[16px]">Background</div>
        <div className="mt-[4px] h-[22px] w-[200px] shrink-0 flex items-center justify-between pl-[1px] pr-[9px] bg-white border border-[#d0d0d0] rounded-[2px]">
          <span>Color Fill</span>
          <Chevron w={7} c="#8a8a8a" />
        </div>
        <div className="mt-[10px] w-[34px] h-[16px] shrink-0 bg-[linear-gradient(to_bottom_right,#b4c1d6_50%,#dde9fb_50%)]" />
        <div className="mt-[8px] h-[16px]">Page Note</div>
        <div className="mt-[3px] flex-1 w-[200px] flex border-l border-[#f0f0f0]">
          <div className="flex-1 bg-white pl-[2px] pt-[3px] text-[#9e9e9e]">Add a note to this page...</div>
          <div className="w-[18px] bg-[#f0f0f0] flex justify-center pt-[7px]">
            <Tri />
          </div>
        </div>
      </div>
      <div className="w-[18px] bg-[#f0f0f0] pl-[6px] pt-[18px]">
        <div className="w-[4px] h-[568px] bg-[#8c8c8c] rounded-full" />
      </div>
    </div>
  </div>
);

export default function App() {
  return (
    <div className="relative w-[1262px] h-[800px] overflow-hidden rounded-[8px] bg-[#f0f0f0] flex flex-col text-[11.500px] leading-[16px] text-[#1a1a1a] font-['Open_Sans','Noto_Sans',sans-serif]">
      {/* Title bar */}
      <div className="h-[31px] shrink-0 flex items-center pl-[8px] text-[#7a7a7a]">
        <svg width="16" height="16" viewBox="0 0 16 16" fill="none">
          <path d="M2 4V13" stroke="#f04fb8" strokeWidth="1" />
          <path d="M2 6V11" stroke="#f03fb0" strokeWidth="3" />
          <path d="M6.500 1V13" stroke="#e23fc8" strokeWidth="1" />
          <path d="M6.500 3V10" stroke="#d83fd0" strokeWidth="3" />
          <path d="M10.500 4V16" stroke="#b440e0" strokeWidth="1" />
          <path d="M10.500 6V14" stroke="#b040e0" strokeWidth="3" />
          <path d="M14.500 2V12" stroke="#8a44e8" strokeWidth="1" />
          <path d="M14.500 4V10" stroke="#8a44e8" strokeWidth="3" />
        </svg>
        <span className="ml-[5px]">E-commerce Sample BI_new - BI Workspace</span>
        <div className="ml-auto flex items-center">
          <svg className="mr-[36px]" width="10" height="10" viewBox="0 0 10 10" stroke="#8a8a8a">
            <path d="M0 5.500H10" />
          </svg>
          <svg className="mr-[36px]" width="10" height="10" viewBox="0 0 10 10" fill="none" stroke="#8a8a8a">
            <rect x=".5" y=".5" width="9" height="9" rx="1" />
          </svg>
          <svg className="mr-[20px]" width="10" height="10" viewBox="0 0 10 10" stroke="#8a8a8a">
            <path d="M0 0L10 10M10 0L0 10" />
          </svg>
        </div>
      </div>

      {/* Menu */}
      <div className="h-[25px] shrink-0 flex items-center pl-[10px]">
        <span className="w-[37px]">File</span>
        <span className="w-[40px]">Edit</span>
        <span className="w-[44px]">View</span>
        <span className="w-[63px]">Window</span>
        <span>Help</span>
      </div>

      {/* Main toolbar */}
      <div className="h-[27px] shrink-0 flex items-center pl-[6px]">
        <Tool w="w-[44px]" gap="gap-[2px]" icon={<SaveIcon />} label="Save" />
        <div className="ml-[9px] w-px h-[20px] bg-[#dcdcdc]" />
        <Tool w="ml-[10px] w-[111px]" gap="gap-[1px]" icon={<DataSourceIcon />} label="New Data Source" />
        <Tool w="ml-[8px] w-[76px]" gap="gap-[2px]" icon={<ChartPlusIcon />} label="New Chart" />
        <Tool w="ml-[7px] w-[105px]" gap="gap-[2px]" icon={<DashPlusIcon />} label="New Dashboard" />
        <Tool w="ml-[8px] w-[101px]" gap="gap-[2px]" icon={<ParamPlusIcon />} label="New Parameter" />
        <div className="ml-[9px] w-px h-[20px] bg-[#dcdcdc]" />
        <Tool w="ml-[10px]" gap="gap-[1px]" icon={<ThemeIcon />} label="Switch Theme" />
      </div>

      {/* Tabs */}
      <div className="h-[27px] shrink-0 flex border-y border-[#d4d4d4]">
        <div className="w-[121px] flex items-center pl-[31px] pt-[1px] text-[#8a8a8a]">Workspace</div>
        <div className="w-[250px] -mb-px bg-white border-x border-[#d4d4d4] flex items-center pl-[4px] gap-[3px]">
          <svg width="16" height="15" viewBox="0 0 16 15">
            <rect width="16" height="15" rx="2" fill="#fddca8" />
            <rect x="2" y="2" width="6" height="5" fill="#f2711c" />
            <rect x="9" y="2" width="5" height="5" fill="#f2711c" />
            <rect x="2" y="8" width="6" height="5" fill="#f2711c" />
            <rect x="9" y="8" width="5" height="5" fill="#f2711c" />
          </svg>
          <span className="pt-[1px]">Dashboard 1</span>
        </div>
      </div>

      {/* Work area */}
      <div className="flex-1 min-h-0 flex">
        <Sidebar />
        <div className="w-[854px] shrink-0 flex flex-col min-h-0">
          <div className="h-[34px] shrink-0 bg-white flex items-center pl-[8px] pt-[4px]">
            <div className="w-[23px] h-[23px] -mt-[3px] bg-[#cce8ff] border border-[#99d1ff] flex items-center justify-center shrink-0">
              <ListIcon />
            </div>
            <div className="ml-[7px] w-px h-[20px] bg-[#dcdcdc]" />
            <Tool w="ml-[15px] w-[75px]" gap="gap-[4px]" icon={<BarsIcon />} label="Add Chart" />
            <Tool w="ml-[17px] w-[69px]" gap="gap-[3px]" icon={<BigT />} label="Add Text" />
            <Tool w="ml-[16px] w-[80px]" gap="gap-[3px]" icon={<ImageIcon />} label="Add Image" />
            <Tool w="ml-[16px] w-[80px]" gap="gap-[2px]" icon={<ShapeIcon />} label="Add Shape" />
            <Tool w="ml-[16px] w-[98px]" gap="gap-[3px]" icon={<TileIcon />} label="Add Tile Layer" />
            <div className="ml-[15px] w-px h-[20px] bg-[#dcdcdc]" />
            <Tool w="ml-[13px] w-[89px]" gap="gap-[2px]" icon={<RefreshIcon />} label="Refresh Data" />
            <div className="ml-[9px] -mt-[2px]"><Chevron w={10} /></div>
            <Tool w="ml-[90px] w-[61px]" gap="gap-[3px]" icon={<PresentIcon />} label="Present" />
            <div className="ml-[17px] flex"><FullscreenIcon /></div>
          </div>
          <div className="flex-1 min-h-0 flex mt-px">
            {/* Object tree */}
            <div className="w-[169px] shrink-0 bg-white flex flex-col min-h-0">
              <div className="h-[27px] shrink-0 flex items-center pl-[8px] font-bold text-[#111]">Objects (Page 2)</div>
              <div className="flex-1 min-h-0 overflow-hidden pt-[4px] pl-[22px]">
                {objects.map(([kind, name], i) => (
                  <div key={i} className="h-[20px] flex items-center whitespace-nowrap">
                    <div className="w-[23px] shrink-0 flex"><ObjIcon kind={kind} /></div>
                    <span>{name}</span>
                  </div>
                ))}
              </div>
              <div className="h-[29px] shrink-0 flex items-center pl-[8px] pt-[1px] gap-[3px] text-[#7a7a7a]">
                <svg width="13" height="13" viewBox="0 0 13 13" fill="none" stroke="#8a8a8a">
                  <circle cx="5.500" cy="5.500" r="4.500" />
                  <path d="M9 9L12.500 12.500" />
                </svg>
                <span>Search</span>
              </div>
            </div>
            <div className="w-[19px] shrink-0 pl-[6px] pt-[17px]">
              <div className="w-[4px] h-[340px] bg-[#8c8c8c] rounded-full" />
            </div>
            {/* Canvas */}
            <div className="flex-1 overflow-hidden bg-[#c5cbd3] flex items-center pl-[10px]">
              <DashboardPage />
            </div>
          </div>
        </div>
        <PropertyPanel />
      </div>

      {/* Status bar */}
      <div className="h-[23px] shrink-0 flex items-center border-t border-[#d8d8d8] pl-[4px]">
        <span className="w-[196px] pt-[1px]">Page 2 of 4</span>
        <div className="w-px h-[22px] bg-[#dedede]" />
        <span className="ml-[932px] w-[79px] pt-[1px]">34%</span>
        <div className="w-[21px] h-[19px] bg-[#cce8ff] border border-[#99d1ff] flex items-center justify-center">
          <svg width="13" height="13" viewBox="0 0 13 13">
            <rect x=".5" y=".5" width="12" height="12" fill="none" stroke="#555" />
            <rect x="1" y="1" width="4" height="11" fill="#555" />
          </svg>
        </div>
        <div className="ml-px w-[21px] h-[19px] bg-[#cce8ff] border border-[#99d1ff] flex items-center justify-center">
          <svg width="13" height="13" viewBox="0 0 13 13">
            <rect x=".5" y=".5" width="12" height="12" fill="none" stroke="#555" />
            <rect x="8" y="1" width="4" height="11" fill="#555" />
          </svg>
        </div>
      </div>

      <ParameterDialog />
      <div className="absolute inset-0 rounded-[8px] border border-[#a8a8a8] pointer-events-none" />
    </div>
  );
}
